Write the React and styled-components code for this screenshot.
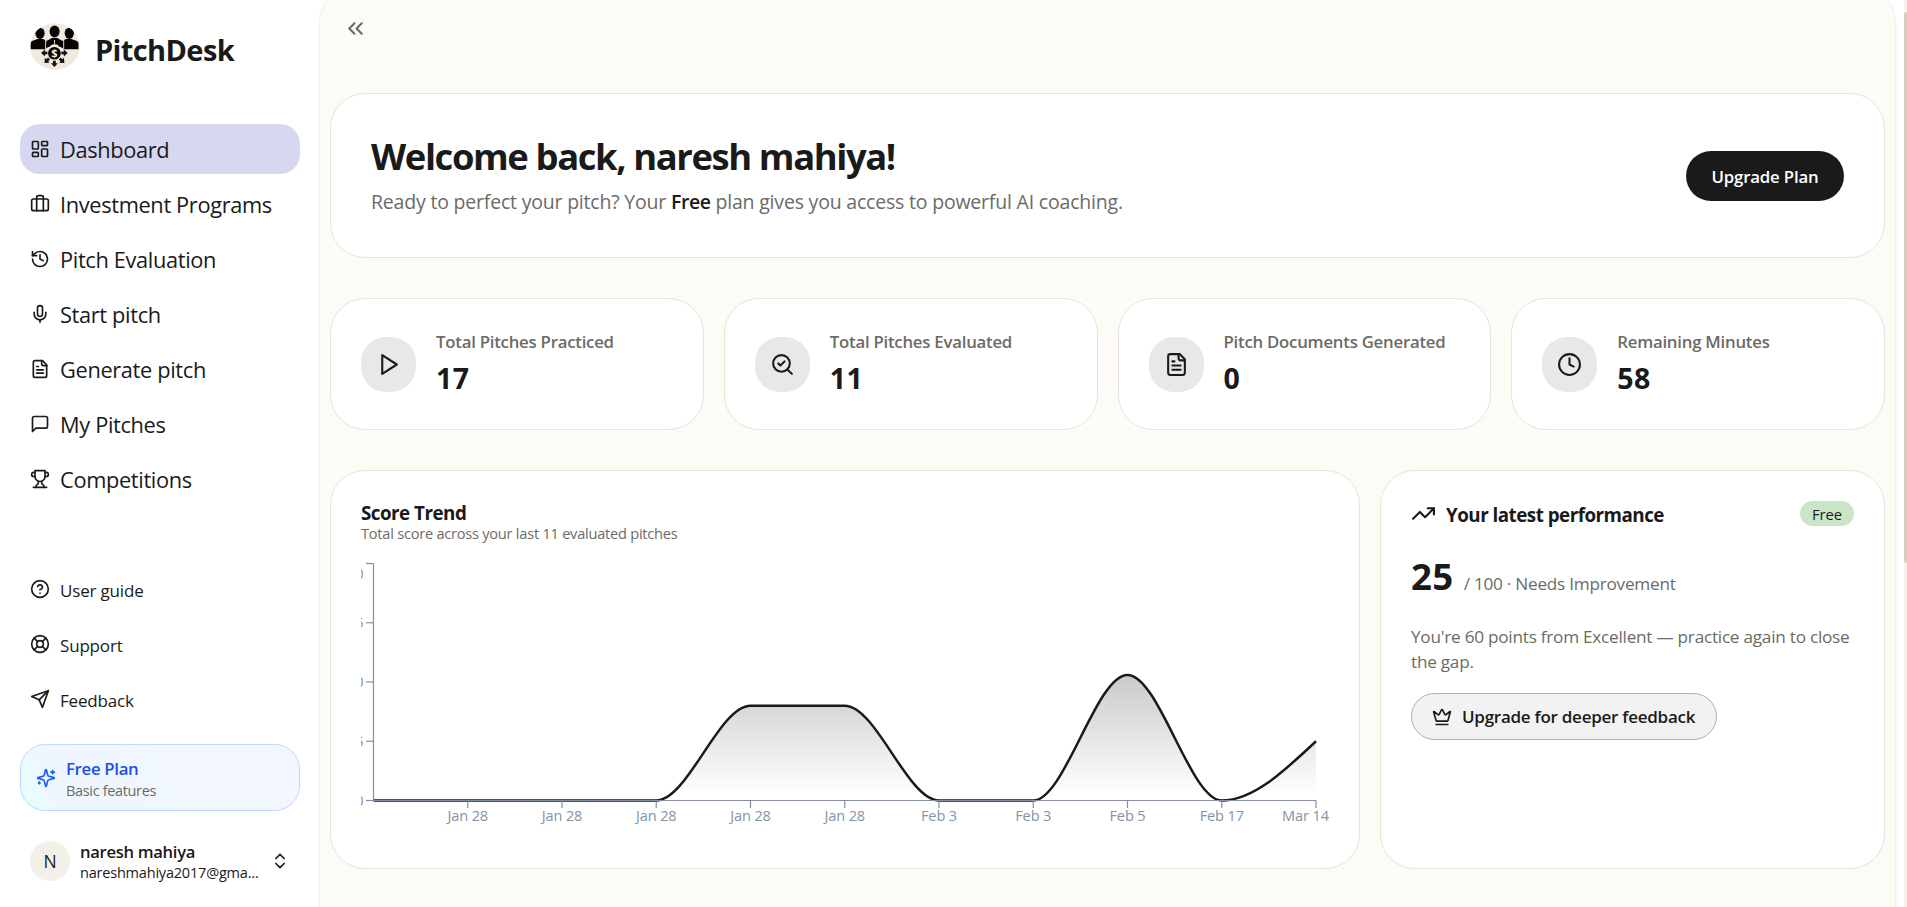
import React from "react";
import styled, { createGlobalStyle } from "styled-components";

const INK = "#1a1a1a";
const MUTED = "#6b6b66";

const GlobalStyle = createGlobalStyle`
  * { box-sizing: border-box; }
  body {
    margin: 0;
    background: #fff;
    color: ${INK};
    font-family: "Open Sans", "Noto Sans", sans-serif;
    overflow: hidden;
  }
  h1, h2, p { margin: 0; }
  button { font-family: inherit; color: inherit; cursor: pointer; }
`;

/* ---------- icons ---------- */

const ICONS = {
  dashboard: (
    <>
      <rect width="7" height="9" x="3" y="3" rx="1" />
      <rect width="7" height="5" x="14" y="3" rx="1" />
      <rect width="7" height="9" x="14" y="12" rx="1" />
      <rect width="7" height="5" x="3" y="16" rx="1" />
    </>
  ),
  briefcase: (
    <>
      <path d="M16 20V4a2 2 0 0 0-2-2h-4a2 2 0 0 0-2 2v16" />
      <rect width="20" height="14" x="2" y="6" rx="2" />
    </>
  ),
  history: (
    <>
      <path d="M3 12a9 9 0 1 0 9-9 9.75 9.75 0 0 0-6.74 2.74L3 8" />
      <path d="M3 3v5h5" />
      <path d="M12 7v5l4 2" />
    </>
  ),
  mic: (
    <>
      <path d="M12 2a3 3 0 0 0-3 3v7a3 3 0 0 0 6 0V5a3 3 0 0 0-3-3Z" />
      <path d="M19 10v2a7 7 0 0 1-14 0v-2" />
      <path d="M12 19v3" />
    </>
  ),
  file: (
    <>
      <path d="M15 2H6a2 2 0 0 0-2 2v16a2 2 0 0 0 2 2h12a2 2 0 0 0 2-2V7Z" />
      <path d="M14 2v4a2 2 0 0 0 2 2h4" />
      <path d="M10 9H8" />
      <path d="M16 13H8" />
      <path d="M16 17H8" />
    </>
  ),
  message: <path d="M21 15a2 2 0 0 1-2 2H7l-4 4V5a2 2 0 0 1 2-2h14a2 2 0 0 1 2 2z" />,
  trophy: (
    <>
      <path d="M6 9H4.5a2.5 2.5 0 0 1 0-5H6" />
      <path d="M18 9h1.5a2.5 2.5 0 0 0 0-5H18" />
      <path d="M4 22h16" />
      <path d="M10 14.66V17c0 .55-.47.98-.97 1.21C7.85 18.75 7 20.24 7 22" />
      <path d="M14 14.66V17c0 .55.47.98.97 1.21C16.15 18.75 17 20.24 17 22" />
      <path d="M18 2H6v7a6 6 0 0 0 12 0V2Z" />
    </>
  ),
  help: (
    <>
      <circle cx="12" cy="12" r="10" />
      <path d="M9.09 9a3 3 0 0 1 5.83 1c0 2-3 3-3 3" />
      <path d="M12 17h.01" />
    </>
  ),
  support: (
    <>
      <circle cx="12" cy="12" r="10" />
      <path d="m4.93 4.93 4.24 4.24" />
      <path d="m14.83 9.17 4.24-4.24" />
      <path d="m14.83 14.83 4.24 4.24" />
      <path d="m9.17 14.83-4.24 4.24" />
      <circle cx="12" cy="12" r="4" />
    </>
  ),
  send: (
    <>
      <path d="m22 2-7 20-4-9-9-4Z" />
      <path d="M22 2 11 13" />
    </>
  ),
  sparkles: (
    <>
      <path d="M9.937 15.5A2 2 0 0 0 8.5 14.063l-6.135-1.582a.5.5 0 0 1 0-.962L8.5 9.936A2 2 0 0 0 9.937 8.5l1.582-6.135a.5.5 0 0 1 .963 0L14.063 8.5A2 2 0 0 0 15.5 9.937l6.135 1.581a.5.5 0 0 1 0 .964L15.5 14.063a2 2 0 0 0-1.437 1.437l-1.582 6.135a.5.5 0 0 1-.963 0z" />
      <path d="M20 3v4" />
      <path d="M22 5h-4" />
      <path d="M4 17v2" />
      <path d="M5 18H3" />
    </>
  ),
  updown: (
    <>
      <path d="m7 15 5 5 5-5" />
      <path d="m7 9 5-5 5 5" />
    </>
  ),
  collapse: (
    <>
      <path d="m11 17-5-5 5-5" />
      <path d="m18 17-5-5 5-5" />
    </>
  ),
  play: <path d="m6 3 14 9-14 9V3z" />,
  searchCheck: (
    <>
      <path d="m8 11 2 2 4-4" />
      <circle cx="11" cy="11" r="8" />
      <path d="m21 21-4.3-4.3" />
    </>
  ),
  clock: (
    <>
      <circle cx="12" cy="12" r="10" />
      <path d="M12 6v6l4 2" />
    </>
  ),
  trend: (
    <>
      <path d="M22 7 13.5 15.5l-5-5L2 17" />
      <path d="M16 7h6v6" />
    </>
  ),
  crown: (
    <>
      <path d="M11.562 3.266a.5.5 0 0 1 .876 0L15.39 8.87a1 1 0 0 0 1.516.294L21.183 5.5a.5.5 0 0 1 .798.519l-2.834 10.246a1 1 0 0 1-.956.734H5.81a1 1 0 0 1-.957-.734L2.02 6.02a.5.5 0 0 1 .798-.519l4.276 3.664a1 1 0 0 0 1.516-.294z" />
      <path d="M5 21h14" />
    </>
  ),
};

const IconSvg = styled.svg`
  flex: none;
  display: block;
  width: ${(p) => p.$size}px;
  height: ${(p) => p.$size}px;
  fill: none;
  stroke: currentColor;
  stroke-width: 2;
  stroke-linecap: round;
  stroke-linejoin: round;
`;

const Icon = ({ name, size = 20 }) => (
  <IconSvg $size={size} viewBox="0 0 24 24" aria-hidden="true">
    {ICONS[name]}
  </IconSvg>
);

const LogoSvg = styled.svg`
  display: block;
  width: 50px;
  height: 47px;
  flex: none;
`;

const Logo = () => (
  <LogoSvg viewBox="0 0 50 47" aria-hidden="true">
    <defs>
      <clipPath id="logo-clip">
        <ellipse cx="25" cy="23.5" rx="24.7" ry="23.2" />
      </clipPath>
      <g id="arrow">
        <rect x="7.5" y="-1.4" width="3.5" height="2.8" />
        <path d="M10-3.4 13.8 0 10 3.4Z" />
      </g>
    </defs>
    <g clipPath="url(#logo-clip)">
      <rect width="50" height="47" fill="#f1e9dc" />
      <g fill="#050505">
        <ellipse cx="10" cy="10.3" rx="4.6" ry="5.6" />
        <path d="M0.5 26.3V21c0-2 1-2.8 3-3.4l4-1.6h5.6l3 1.6v8.7Z" />
        <ellipse cx="39.3" cy="10.3" rx="4.6" ry="5.6" />
        <path d="M48.5 26.3V21c0-2-1-2.8-3-3.4l-4-1.6h-5.6l-2.7 1.6v8.7Z" />
        <ellipse cx="24.6" cy="8.5" rx="5" ry="6.1" />
        <path d="M15.5 25.5v-5c0-2 1-2.8 3-3.6l3.2-1.9h5.8l3.2 1.9c2 .8 3 1.6 3 3.6v5l-4.5-2-2.2-2h-4.8l-2.5 2Z" />
        <circle cx="24.4" cy="30.3" r="6.3" />
      </g>
      <path d="M15.6 16.5v9.5M33.7 16.5v9.5M24.6 17v7" stroke="#f1e9dc" strokeWidth="0.9" />
      <g transform="translate(24.4 30.3)" fill="#111">
        <use href="#arrow" transform="translate(-.5 -.3)" />
        <use href="#arrow" transform="rotate(44)" />
        <use href="#arrow" transform="rotate(90)" />
        <use href="#arrow" transform="rotate(136)" />
        <use href="#arrow" transform="translate(.5 -.3) rotate(180)" />
      </g>
      <text x="24.4" y="34.2" textAnchor="middle" fontSize="11" fontWeight="700" fill="#f1e9dc">$</text>
    </g>
  </LogoSvg>
);

/* ---------- shell ---------- */

const Shell = styled.div`
  display: flex;
  width: 1907px;
  height: 907px;
  overflow: hidden;
  background: #fff;
`;

const Sidebar = styled.aside`
  flex: none;
  display: flex;
  flex-direction: column;
  width: 319px;
  padding: 23px 19px 0 20px;
`;

const Brand = styled.div`
  display: flex;
  align-items: flex-start;
  gap: 15px;
  height: 101px;
  padding-left: 10px;
`;

const BrandName = styled.div`
  font-size: 29px;
  font-weight: 700;
  letter-spacing: -0.62px;
  line-height: 54px;
`;

const Nav = styled.nav`
  display: flex;
  flex-direction: column;
  gap: 5px;
  margin-bottom: ${(p) => p.$bottom}px;
`;

const NavItem = styled.a`
  display: flex;
  align-items: center;
  gap: 10px;
  height: 50px;
  padding: 0 10px;
  border-radius: 20px;
  background: ${(p) => (p.$active ? "#d6d8ef" : "transparent")};
  font-size: ${(p) => (p.$small ? 17 : 21.8)}px;
  font-weight: ${(p) => (p.$active ? 530 : 400)};
  letter-spacing: ${(p) => (p.$small ? -0.18 : -0.35)}px;
  white-space: nowrap;

  span { padding-top: ${(p) => (p.$small ? 3 : 1)}px; }
`;

const PlanCard = styled.div`
  display: flex;
  align-items: center;
  gap: 10px;
  height: 67px;
  padding: 1px 15px 0;
  border: 1px solid #bedbff;
  border-radius: 25px;
  background: linear-gradient(67deg, #e6fcff 0, #eafcff 10%, #eff6ff 11%, #f3f7ff 100%);
  color: #155dfc;
`;

const PlanName = styled.div`
  font-size: 16.8px;
  font-weight: 600;
  letter-spacing: -0.32px;
  line-height: 24px;
  color: #1a50e8;
`;

const PlanNote = styled.div`
  font-size: 14.5px;
  letter-spacing: -0.34px;
  line-height: 19px;
  color: ${MUTED};
`;

const UserRow = styled.div`
  display: flex;
  align-items: center;
  height: 60px;
  margin-top: 20px;
  padding: 0 10px;
`;

const Avatar = styled.div`
  flex: none;
  display: grid;
  place-items: center;
  width: 40px;
  height: 40px;
  margin-right: 10px;
  border-radius: 50%;
  background: #f3f0ea;
  font-size: 17.5px;
  line-height: 1;
  padding-top: 2px;
`;

const UserText = styled.div`
  flex: 1;
  min-width: 0;
  padding-top: 1px;
`;

const UserName = styled.div`
  font-size: 16.6px;
  font-weight: 600;
  letter-spacing: -0.3px;
  line-height: 22px;
`;

const UserMail = styled.div`
  font-size: 14.5px;
  letter-spacing: -0.2px;
  line-height: 19px;
`;

/* ---------- main panel ---------- */

const Panel = styled.main`
  flex: none;
  width: 1577px;
  height: 980px;
  margin-top: -16px;
  padding: 31px 10px 0;
  border: 1px solid #f3f2ee;
  border-radius: 40px;
  background: #fcfbf6;
  box-shadow: 0 1px 3px rgba(0, 0, 0, 0.06);
`;

const Toolbar = styled.div`
  height: 77px;
  padding-left: 13px;
  color: ${MUTED};
`;

const Card = styled.section`
  border: 1px solid #e8e4d9;
  border-radius: 35px;
  background: #fff;
`;

const Welcome = styled(Card)`
  display: flex;
  justify-content: space-between;
  align-items: center;
  height: 165px;
  padding: 0 40px;
`;

const WelcomeTitle = styled.h1`
  font-size: 36.4px;
  font-weight: 700;
  letter-spacing: -1.4px;
  line-height: 45px;
  margin-bottom: 8px;
`;

const WelcomeText = styled.p`
  margin-bottom: 1px;
  font-size: 19.5px;
  letter-spacing: -0.2px;
  line-height: 30px;
  color: ${MUTED};

  b { font-weight: 600; color: ${INK}; letter-spacing: -0.4px; }
`;

const PrimaryButton = styled.button`
  height: 50px;
  width: 158px;
  padding-top: 2px;
  border: 0;
  border-radius: 25px;
  background: ${INK};
  color: #fff;
  font-size: 16.8px;
  font-weight: 600;
  letter-spacing: -0.16px;
`;

const Stats = styled.div`
  display: grid;
  grid-template-columns: repeat(4, 1fr);
  gap: 20px;
  margin: 40px 0;
`;

const StatCard = styled(Card)`
  display: flex;
  align-items: center;
  gap: 20px;
  height: 132px;
  padding: 0 30px;
`;

const StatIcon = styled.div`
  display: grid;
  place-items: center;
  width: 55px;
  height: 55px;
  border-radius: 25px;
  background: #e8e8e8;
`;

const StatText = styled.div`
  padding-top: 2px;
`;

const StatLabel = styled.div`
  font-size: 16.8px;
  font-weight: 600;
  letter-spacing: -0.24px;
  line-height: 26px;
  color: ${MUTED};
`;

const StatValue = styled.div`
  font-size: 28.5px;
  font-weight: 700;
  letter-spacing: 0.5px;
  line-height: 46px;
`;

const Panels = styled.div`
  display: grid;
  grid-template-columns: 1030px 1fr;
  gap: 20px;
`;

const Tile = styled(Card)`
  height: 399px;
  padding: 30px;
`;

const TileTitle = styled.h2`
  font-size: 18.8px;
  font-weight: 700;
  letter-spacing: -0.51px;
  line-height: 24px;
`;

const TileNote = styled.p`
  font-size: 14.6px;
  letter-spacing: -0.24px;
  line-height: 16px;
  color: ${MUTED};
`;

const ChartSvg = styled.svg`
  display: block;
  width: 968px;
  height: 280px;
  margin-top: 12px;
  overflow: hidden;

  text {
    font-size: 14.6px;
    letter-spacing: -0.15px;
    fill: #8494a4;
  }
`;

const TileHead = styled.div`
  display: flex;
  align-items: flex-start;
  gap: 10px;
  height: 54px;

  h2 { flex: 1; padding-top: 2px; }
`;

const Badge = styled.span`
  width: 54px;
  height: 25px;
  border-radius: 13px;
  background: #c9e4c6;
  font-size: 14.8px;
  font-weight: 500;
  line-height: 26px;
  letter-spacing: -0.1px;
  text-align: center;
`;

const Score = styled.div`
  display: flex;
  align-items: baseline;
  gap: 10px;
  height: 69px;
  font-size: 36.6px;
  font-weight: 700;
  letter-spacing: 0.4px;
  line-height: 42px;

  span {
    font-size: 17.2px;
    font-weight: 400;
    letter-spacing: -0.25px;
    color: ${MUTED};
  }
`;

const Advice = styled.p`
  margin-bottom: 19px;
  font-size: 17.2px;
  letter-spacing: -0.25px;
  line-height: 25px;
  color: ${MUTED};
`;

const GhostButton = styled.button`
  display: flex;
  align-items: center;
  gap: 10px;
  width: 306px;
  height: 47px;
  padding: 0 20px;
  border: 1px solid #b0b0b0;
  border-radius: 24px;
  background: #f2f2f2;
  font-size: 17px;
  font-weight: 600;
  letter-spacing: -0.26px;
  white-space: nowrap;
`;

const ScrollTrack = styled.div`
  flex: none;
  width: 3px;
  height: 907px;
  margin-left: 8px;
  padding-top: 12px;
  background: #f5f2ec;
`;

const ScrollThumb = styled.div`
  height: 551px;
  border-radius: 3px 0 0 3px;
  background: #d6cfbd;
`;

/* ---------- chart ---------- */

const SCORES = [
  ["Jan 28", 0], ["Jan 28", 0], ["Jan 28", 0], ["Jan 28", 0], ["Jan 28", 40], ["Jan 28", 40],
  ["Feb 3", 0], ["Feb 3", 0], ["Feb 5", 53], ["Feb 17", 0], ["Mar 14", 25],
];

const LEFT = 12.5;
const TOP = 10.5;
const BASE = 247.5;
const STEP = 94.25;

const px = (i) => LEFT + i * STEP;
const py = (v) => BASE - (v / 100) * (BASE - TOP);

function monotonePath(pts) {
  const n = pts.length;
  const d = pts.slice(1).map((p, i) => (p[1] - pts[i][1]) / (p[0] - pts[i][0]));
  const m = pts.map((_, i) => {
    if (i === 0 || i === n - 1) return 0;
    const s0 = d[i - 1];
    const s1 = d[i];
    if (s0 * s1 <= 0) return 0;
    return 2 * Math.min(Math.abs(s0), Math.abs(s1), Math.abs(s0 + s1) / 4) * Math.sign(s0);
  });
  m[0] = (3 * d[0] - m[1]) / 2;
  m[n - 1] = (3 * d[n - 2] - m[n - 2]) / 2;
  return pts.reduce((path, [x, y], i) => {
    if (i === 0) return `M${x},${y}`;
    const [x0, y0] = pts[i - 1];
    const h = (x - x0) / 3;
    return `${path}C${x0 + h},${y0 + m[i - 1] * h} ${x - h},${y - m[i] * h} ${x},${y}`;
  }, "");
}

const TrendChart = () => {
  const line = monotonePath(SCORES.map(([, v], i) => [px(i), py(v)]));
  const end = px(SCORES.length - 1);
  return (
    <ChartSvg viewBox="0 0 968 280">
      <defs>
        <linearGradient id="score-fill" x1="0" y1="0" x2="0" y2="1">
          <stop offset="5%" stopColor={INK} stopOpacity="0.22" />
          <stop offset="95%" stopColor={INK} stopOpacity="0" />
        </linearGradient>
      </defs>
      <path d={`${line}L${end},${BASE}L${LEFT},${BASE}Z`} fill="url(#score-fill)" />
      <path d={line} fill="none" stroke={INK} strokeWidth="2.5" />
      <g stroke="#858da0" strokeWidth="1.2">
        <path d={`M${LEFT},${TOP}V${BASE}H${end}`} fill="none" />
        {[0, 25, 50, 75, 100].map((v) => (
          <path key={v} d={`M${LEFT - 7.5},${py(v)}H${LEFT}`} />
        ))}
        {SCORES.slice(1).map((_, i) => (
          <path key={i} d={`M${px(i + 1)},${BASE}v7.5`} />
        ))}
      </g>
      {[0, 25, 50, 75, 100].map((v) => (
        <text key={v} x="2.5" y={v === 100 ? 26 : py(v) + 5.3} textAnchor="end">{v}</text>
      ))}
      {SCORES.slice(1).map(([label], i) => (
        <text key={i} x={i === 9 ? 944.5 : px(i + 1)} y="268" textAnchor="middle">{label}</text>
      ))}
    </ChartSvg>
  );
};

/* ---------- data ---------- */

const MAIN_NAV = [
  ["dashboard", "Dashboard"],
  ["briefcase", "Investment Programs"],
  ["history", "Pitch Evaluation"],
  ["mic", "Start pitch"],
  ["file", "Generate pitch"],
  ["message", "My Pitches"],
  ["trophy", "Competitions"],
];

const HELP_NAV = [
  ["help", "User guide"],
  ["support", "Support"],
  ["send", "Feedback"],
];

const STATS = [
  ["play", "Total Pitches Practiced", 17],
  ["searchCheck", "Total Pitches Evaluated", 11],
  ["file", "Pitch Documents Generated", 0],
  ["clock", "Remaining Minutes", 58],
];

export default function App() {
  return (
    <>
      <GlobalStyle />
      <Shell>
        <Sidebar>
          <Brand>
            <Logo />
            <BrandName>PitchDesk</BrandName>
          </Brand>
          <Nav $bottom={60}>
            {MAIN_NAV.map(([icon, label], i) => (
              <NavItem key={label} $active={i === 0}>
                <Icon name={icon} />
                <span>{label}</span>
              </NavItem>
            ))}
          </Nav>
          <Nav $bottom={20}>
            {HELP_NAV.map(([icon, label]) => (
              <NavItem key={label} $small>
                <Icon name={icon} />
                <span>{label}</span>
              </NavItem>
            ))}
          </Nav>
          <PlanCard>
            <Icon name="sparkles" />
            <div>
              <PlanName>Free Plan</PlanName>
              <PlanNote>Basic features</PlanNote>
            </div>
          </PlanCard>
          <UserRow>
            <Avatar>N</Avatar>
            <UserText>
              <UserName>naresh mahiya</UserName>
              <UserMail>nareshmahiya2017@gma...</UserMail>
            </UserText>
            <Icon name="updown" />
          </UserRow>
        </Sidebar>

        <Panel>
          <Toolbar>
            <Icon name="collapse" size={25} />
          </Toolbar>
          <Welcome>
            <div>
              <WelcomeTitle>Welcome back, naresh mahiya!</WelcomeTitle>
              <WelcomeText>
                Ready to perfect your pitch? Your <b>Free</b> plan gives you access to powerful AI coaching.
              </WelcomeText>
            </div>
            <PrimaryButton>Upgrade Plan</PrimaryButton>
          </Welcome>
          <Stats>
            {STATS.map(([icon, label, value]) => (
              <StatCard key={label}>
                <StatIcon>
                  <Icon name={icon} size={25} />
                </StatIcon>
                <StatText>
                  <StatLabel>{label}</StatLabel>
                  <StatValue>{value}</StatValue>
                </StatText>
              </StatCard>
            ))}
          </Stats>
          <Panels>
            <Tile>
              <TileTitle>Score Trend</TileTitle>
              <TileNote>Total score across your last 11 evaluated pitches</TileNote>
              <TrendChart />
            </Tile>
            <Tile>
              <TileHead>
                <Icon name="trend" size={25} />
                <TileTitle>Your latest performance</TileTitle>
                <Badge>Free</Badge>
              </TileHead>
              <Score>
                25 <span>/ 100 · Needs Improvement</span>
              </Score>
              <Advice>
                You're 60 points from Excellent — practice again to close
                <br />
                the gap.
              </Advice>
              <GhostButton>
                <Icon name="crown" />
                Upgrade for deeper feedback
              </GhostButton>
            </Tile>
          </Panels>
        </Panel>
        <ScrollTrack>
          <ScrollThumb />
        </ScrollTrack>
      </Shell>
    </>
  );
}
